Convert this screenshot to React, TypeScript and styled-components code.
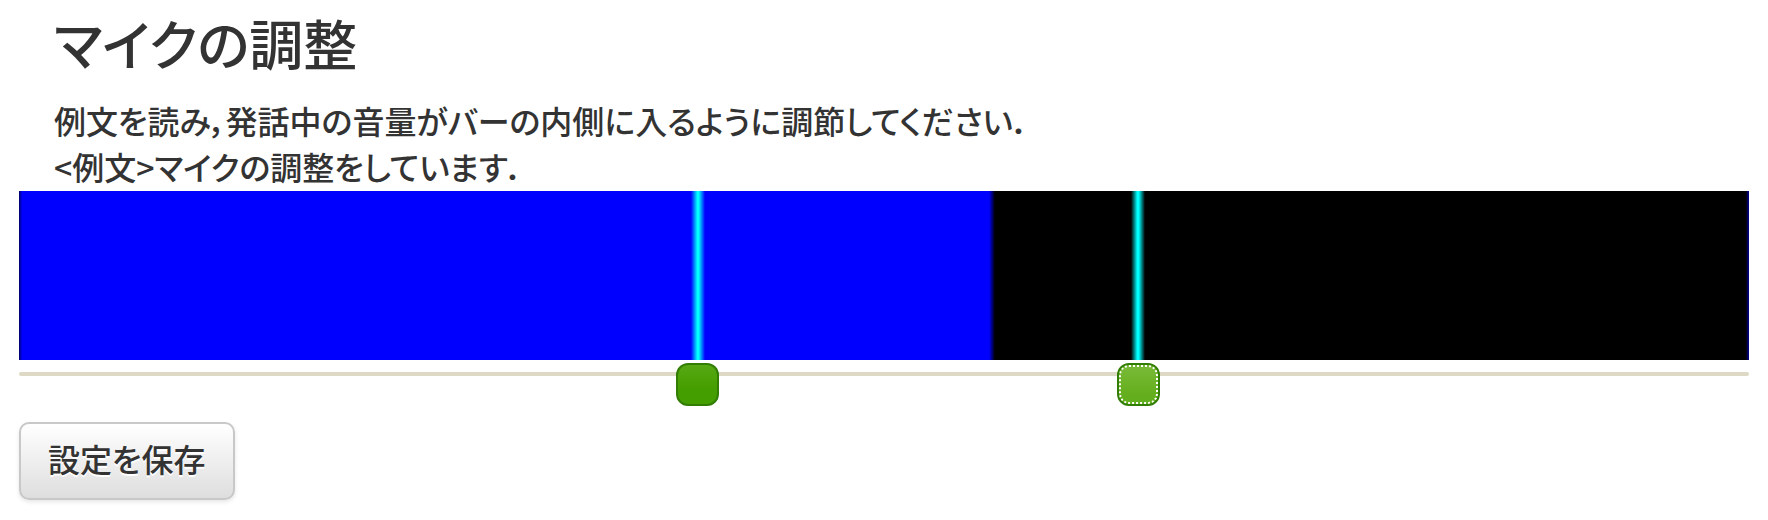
import React, { useState } from "react";
import styled, { createGlobalStyle, css } from "styled-components";

const GlobalStyle = createGlobalStyle`
  *, *::before, *::after { box-sizing: border-box; }
  body {
    margin: 0;
    background: #fff;
    color: #333;
    font-family: "Noto Sans CJK JP", "Liberation Sans", sans-serif;
    font-feature-settings: "palt";
  }
`;

const Page = styled.main`
  padding: 0 19px 20px;
`;

const Intro = styled.header`
  padding: 5px 35px 2px;
`;

const Title = styled.h1`
  margin: 0 0 16px;
  font-size: 54px;
  font-weight: 500;
  line-height: 76px;
`;

const Guide = styled.p`
  margin: 0;
  font-size: 32px;
  font-weight: 500;
  line-height: 46px;
`;

const Meter = styled.div`
  position: relative;
  height: 169px;
  overflow: hidden;
  background: linear-gradient(to left, #0000a0 0, transparent 3px), #000;
`;

const Level = styled.div`
  height: 100%;
  background: linear-gradient(to right, #000060 0, #00f 3px, #00f calc(100% - 6px), #000 100%);
`;

const Marker = styled.div`
  position: absolute;
  top: 0;
  bottom: 0;
  width: 14px;
  margin-left: -7px;
  background: linear-gradient(to right, rgba(0, 255, 255, 0), #0ff 45%, #0ff 55%, rgba(0, 255, 255, 0));
`;

const Slider = styled.div`
  position: relative;
  height: 62px;
  padding-top: 12px;
`;

const Track = styled.div`
  height: 4px;
  border-radius: 2px;
  background: #ded9c5;
`;

const idle = css`
  border: 2px solid #327e04;
  background: linear-gradient(#57a813, #459e00 60%);
`;

const focused = css`
  border: 2px solid #327e04;
  background: linear-gradient(#7aba38, #63ae1c 80%);
  outline: 2px dotted #fff;
  outline-offset: -4px;
`;

const Handle = styled.input<{ $active: boolean }>`
  position: absolute;
  top: 3px;
  left: -22px;
  width: calc(100% + 44px);
  height: 43px;
  margin: 0;
  appearance: none;
  background: transparent;
  outline: none;
  pointer-events: none;

  &::-webkit-slider-runnable-track {
    height: 43px;
    background: transparent;
  }

  &::-webkit-slider-thumb {
    appearance: none;
    width: 43px;
    height: 43px;
    border-radius: 12px;
    cursor: pointer;
    pointer-events: auto;
    ${({ $active }) => ($active ? focused : idle)}
  }
`;

const SaveButton = styled.button`
  padding: 12px 27px 18px;
  border: 2px solid #c8c8c8;
  border-radius: 10px;
  background: linear-gradient(#fff, #dedede);
  box-shadow: 0 2px 4px rgba(0, 0, 0, 0.1);
  color: #333;
  font: inherit;
  font-size: 32px;
  font-weight: 500;
  font-feature-settings: inherit;
  line-height: 44px;
  text-shadow: 0 2px 0 #fff;
  cursor: pointer;
`;

const level = 56.4;

export default function App() {
  const [range, setRange] = useState([39.25, 64.7]);
  const [active, setActive] = useState(1);
  const labels = ["音量の下限", "音量の上限"];

  const move = (index: number, value: number) => {
    setRange((prev) => prev.map((v, i) => (i === index ? value : v)));
  };

  return (
    <>
      <GlobalStyle />
      <Page>
        <Intro>
          <Title>マイクの調整</Title>
          <Guide>例文を読み，発話中の音量がバーの内側に入るように調節してください．</Guide>
          <Guide>&lt;例文&gt;マイクの調整をしています．</Guide>
        </Intro>
        <Meter role="meter" aria-label="音量" aria-valuemin={0} aria-valuemax={100} aria-valuenow={level}>
          <Level style={{ width: `${level}%` }} />
          {range.map((value, i) => (
            <Marker key={i} style={{ left: `${value}%` }} />
          ))}
        </Meter>
        <Slider>
          <Track />
          {range.map((value, i) => (
            <Handle
              key={i}
              type="range"
              min={0}
              max={100}
              step={0.01}
              value={value}
              aria-label={labels[i]}
              $active={active === i}
              onFocus={() => setActive(i)}
              onChange={(e) => move(i, Number(e.target.value))}
            />
          ))}
        </Slider>
        <SaveButton type="button">設定を保存</SaveButton>
      </Page>
    </>
  );
}
